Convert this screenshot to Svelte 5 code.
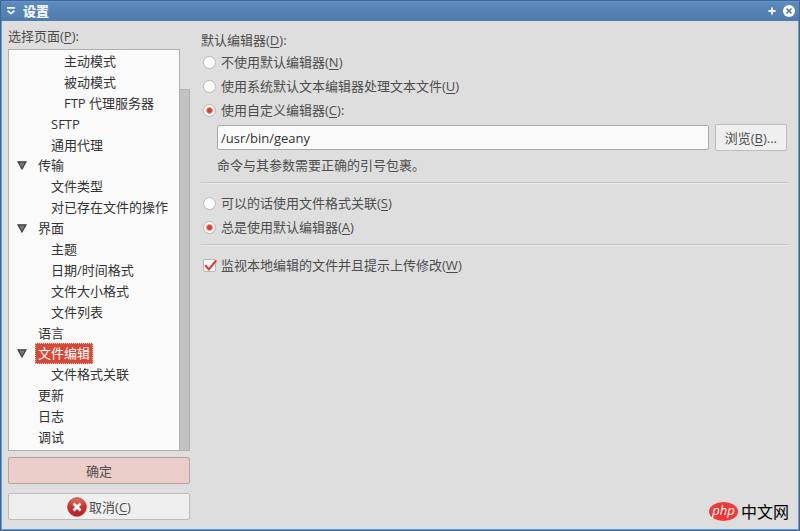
<script>
  const pages = [
    { label: '主动模式', level: 2 },
    { label: '被动模式', level: 2 },
    { label: 'FTP 代理服务器', level: 2 },
    { label: 'SFTP', level: 1 },
    { label: '通用代理', level: 1 },
    { label: '传输', level: 0, open: true },
    { label: '文件类型', level: 1 },
    { label: '对已存在文件的操作', level: 1 },
    { label: '界面', level: 0, open: true },
    { label: '主题', level: 1 },
    { label: '日期/时间格式', level: 1 },
    { label: '文件大小格式', level: 1 },
    { label: '文件列表', level: 1 },
    { label: '语言', level: 0 },
    { label: '文件编辑', level: 0, open: true },
    { label: '文件格式关联', level: 1 },
    { label: '更新', level: 0 },
    { label: '日志', level: 0 },
    { label: '调试', level: 0 }
  ];
  let selected = $state('文件编辑');
  let editor = $state('custom');
  let association = $state('always');
  let watch = $state(true);
  let command = $state('/usr/bin/geany');
</script>

{#snippet key(letter)}(<u>{letter}</u>){/snippet}

<div class="window">
  <header class="titlebar">
    <button class="winbtn" aria-label="窗口菜单">
      <svg width="10" height="10" viewBox="0 0 10 10"><path d="M1 1.8h8M1.6 4.6l3.4 3 3.4-3" fill="none" stroke="#f2f5fa" stroke-width="1.8" /></svg>
    </button>
    <h1>设置</h1>
    <button class="winbtn" aria-label="最大化">
      <svg width="8" height="8" viewBox="0 0 8 8"><path d="M4 .5v7M.5 4h7" stroke="#f2f5fa" stroke-width="1.8" /></svg>
    </button>
    <button class="winbtn" aria-label="关闭">
      <svg width="12" height="12" viewBox="0 0 12 12"><circle cx="6" cy="6" r="6" fill="#fff" /><path d="M3.5 3.5l5 5M8.5 3.5l-5 5" stroke="#5078a8" stroke-width="1.6" /></svg>
    </button>
  </header>

  <div class="body">
    <aside>
      <div class="caption" id="pages-label">选择页面{@render key('P')}:</div>
      <div class="treebox">
        <ul aria-labelledby="pages-label">
          {#each pages as page}
            <li class="level{page.level}">
              <span class="arrow">
                {#if page.open}
                  <svg width="10" height="9" viewBox="0 0 10 9"><path d="M1 .8h8L5 8z" fill="#777" stroke="#3c3c3c" stroke-width="1.2" /></svg>
                {/if}
              </span>
              <button class="page" class:selected={selected === page.label} onclick={() => (selected = page.label)}>{page.label}</button>
            </li>
          {/each}
        </ul>
        <div class="track"><div class="thumb"></div></div>
      </div>
      <button class="btn ok">确定</button>
      <button class="btn cancel">
        <svg width="20" height="20" viewBox="0 0 20 20">
          <defs><linearGradient id="red" x1="0" y1="0" x2="0" y2="1"><stop offset="0" stop-color="#e8745c" /><stop offset=".5" stop-color="#cf2f2c" /><stop offset="1" stop-color="#b5202a" /></linearGradient></defs>
          <circle cx="10" cy="10" r="9.3" fill="url(#red)" stroke="#a52a2a" stroke-width=".8" />
          <path d="M6.5 6.5l7 7M13.5 6.5l-7 7" stroke="#fff" stroke-width="2.8" />
        </svg>
        <span>取消{@render key('C')}</span>
      </button>
    </aside>

    <main>
      <div class="caption" id="editor-label">默认编辑器{@render key('D')}:</div>
      <div class="group" role="radiogroup" aria-labelledby="editor-label">
        <label><input type="radio" name="editor" value="none" bind:group={editor} /><span>不使用默认编辑器{@render key('N')}</span></label>
        <label><input type="radio" name="editor" value="system" bind:group={editor} /><span>使用系统默认文本编辑器处理文本文件{@render key('U')}</span></label>
        <label><input type="radio" name="editor" value="custom" bind:group={editor} /><span>使用自定义编辑器{@render key('C')}:</span></label>
      </div>
      <div class="command">
        <input type="text" aria-label="使用自定义编辑器" bind:value={command} />
        <button class="btn browse"><span>浏览{@render key('B')}...</span></button>
      </div>
      <p>命令与其参数需要正确的引号包裹。</p>
      <hr />
      <div class="group" role="radiogroup" aria-label="文件格式关联">
        <label><input type="radio" name="association" value="assoc" bind:group={association} /><span>可以的话使用文件格式关联{@render key('S')}</span></label>
        <label><input type="radio" name="association" value="always" bind:group={association} /><span>总是使用默认编辑器{@render key('A')}</span></label>
      </div>
      <hr />
      <label>
        <span class="tick">
          <input type="checkbox" bind:checked={watch} />
          {#if watch}
            <svg width="15" height="13" viewBox="0 0 15 13"><path d="M2.2 6.2l3.6 4.2L13.2 1.4" fill="none" stroke="#d8402e" stroke-width="2.2" /></svg>
          {/if}
        </span>
        <span>监视本地编辑的文件并且提示上传修改{@render key('W')}</span>
      </label>
    </main>
  </div>

  <div class="brand"><span class="php">php</span><span class="cn">中文网</span></div>
</div>

<style>
  :global(body) {
    margin: 0;
  }
  .window {
    position: relative;
    box-sizing: border-box;
    height: 100vh;
    display: flex;
    flex-direction: column;
    border: 1px solid #3d6798;
    background: #dedede;
    box-shadow: inset 0 0 0 1px #6c9ccf;
    font: 13px/20px 'Open Sans', 'Noto Sans CJK SC', sans-serif;
    color: #4d4d4d;
  }
  button,
  input {
    font: inherit;
    color: inherit;
    margin: 0;
  }
  u {
    text-underline-offset: 2px;
  }
  .titlebar {
    display: flex;
    align-items: center;
    gap: 7px;
    height: 20px;
    padding: 0 4px 0 5px;
    background: linear-gradient(#6797cb, #5b89bb 2px, #4f7cac);
    color: #f2f5fa;
  }
  h1 {
    flex: 1;
    margin: 0;
    font-size: 13px;
    line-height: 20px;
    font-weight: 900;
  }
  .winbtn {
    display: flex;
    padding: 0;
    border: 0;
    background: none;
  }
  .body {
    flex: 1;
    min-height: 0;
    display: flex;
    gap: 11px;
    padding: 5px 11px 10px 7px;
  }
  aside {
    flex: none;
    width: 182px;
    display: flex;
    flex-direction: column;
  }
  .treebox {
    flex: 1;
    min-height: 0;
    display: flex;
    margin: 3px 0 6px;
  }
  ul {
    flex: 1;
    display: flex;
    flex-direction: column;
    margin: 0;
    padding: 1px 0 2px;
    list-style: none;
    background: #fafafa;
    border: 1px solid #b0b0b0;
    color: #333;
  }
  li {
    flex: 1;
    min-height: 0;
    display: flex;
    align-items: center;
  }
  .arrow {
    flex: none;
    width: 26px;
    box-sizing: border-box;
    padding-left: 8px;
    display: flex;
  }
  .level1 .arrow {
    width: 39px;
  }
  .level2 .arrow {
    width: 52px;
  }
  .page {
    padding: 0 2px;
    border: 1px solid transparent;
    background: none;
    line-height: 19px;
    white-space: nowrap;
  }
  .selected {
    background: #d64937;
    border: 1px dotted #f3b9b0;
    color: #fff;
  }
  .track {
    width: 10px;
    display: flex;
    flex-direction: column;
    padding-top: 40px;
  }
  .thumb {
    flex: 1;
    background: #c3c3c3;
    border: 1px solid #b0b0b0;
    border-left: 0;
  }
  .btn {
    box-sizing: border-box;
    height: 27px;
    display: flex;
    align-items: center;
    justify-content: center;
    gap: 2px;
    padding: 0 9px;
    border: 1px solid #bcbcbc;
    border-radius: 2px;
    background: #efefef;
    color: #4d4d4d;
  }
  .ok {
    background: #ebcdca;
    border-color: #b5a5a3;
    margin-bottom: 9px;
  }
  main {
    flex: 1;
    min-width: 0;
  }
  .group {
    display: flex;
    flex-direction: column;
    gap: 4px;
  }
  main .caption {
    padding: 4px 0 2px;
  }
  label {
    display: flex;
    align-items: center;
    gap: 5px;
    padding-left: 2px;
  }
  input[type='radio'] {
    appearance: none;
    width: 13px;
    height: 13px;
    border: 1px solid #b8b8b8;
    border-radius: 50%;
    background: #fafafa;
  }
  input[type='radio']:checked {
    background: radial-gradient(circle, #d8402e 2px, #fafafa 4px);
  }
  .tick {
    position: relative;
    display: flex;
    width: 13px;
  }
  input[type='checkbox'] {
    appearance: none;
    width: 13px;
    height: 13px;
    border: 1px solid #b8b8b8;
    border-radius: 2px;
    background: #fafafa;
  }
  .tick svg {
    position: absolute;
    left: 0;
    top: 0;
  }
  .command {
    display: flex;
    align-items: center;
    gap: 6px;
    padding: 4px 1px 4px 16px;
  }
  input[type='text'] {
    flex: 1;
    min-width: 0;
    box-sizing: border-box;
    height: 25px;
    padding: 0 3px;
    border: 1px solid #aaa;
    border-radius: 2px;
    background: #fafafa;
    color: #333;
  }
  p {
    margin: 0 0 0 16px;
  }
  hr {
    border: 0;
    height: 1px;
    background: #c6c6c6;
    border-bottom: 1px solid #eaeaea;
    margin: 7px 0 9px;
  }
  .brand {
    position: absolute;
    right: 10px;
    bottom: 9px;
    display: flex;
    align-items: center;
    gap: 3px;
  }
  .php {
    width: 29px;
    height: 19px;
    border-radius: 50%;
    background: radial-gradient(#f02a28, #f23c3a 60%, #e2231f);
    color: #fff;
    font: italic 13px/16px 'Open Sans', sans-serif;
    text-align: center;
  }
  .cn {
    font: 400 16px/20px 'Noto Sans CJK SC', sans-serif;
    color: #000;
  }
</style>
